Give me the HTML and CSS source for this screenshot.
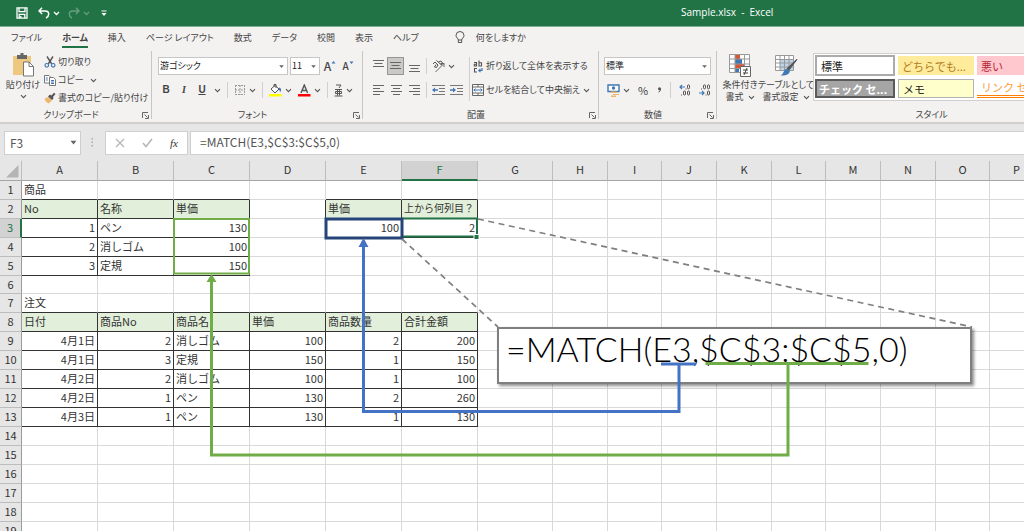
FILE: index.html
```html
<!DOCTYPE html>
<html lang="ja">
<head>
<meta charset="utf-8">
<title>Sample.xlsx - Excel</title>
<link rel="stylesheet" href="styles.css">
</head>
<body>
<svg class="defs" aria-hidden="true">
  <symbol id="chev" viewBox="0 0 7 7"><path d="M1 2.200 3.500 4.700 6 2.200" fill="none" stroke="#555" stroke-width="1.100"/></symbol>
  <symbol id="tri" viewBox="0 0 7 7"><path d="M1.200 2.200h4.600L3.500 5z" fill="#666"/></symbol>
  <symbol id="launch" viewBox="0 0 7 7"><path d="M.5 6V.5H6M2.500 2.500 5.500 5.500M6.500 3v3.500H3" fill="none" stroke="#666" stroke-width="1"/></symbol>
</svg>

<header class="titlebar">
  <div class="quick">
    <button type="button" aria-label="上書き保存"><svg width="12" height="12" viewBox="0 0 12 12"><path d="M1 .8h10v10.400H1zM3 1v3.600h6V1M3.200 11V7.400h5.600V11M4.800 9v2" fill="none" stroke="#fff" stroke-width="1.300"/></svg></button>
    <button type="button" aria-label="元に戻す"><svg width="12" height="12" viewBox="0 0 12 12"><path d="M4 .8 1 4l3.200 3M1.200 4H7c5 0 4.500 5 1 7" fill="none" stroke="#fff" stroke-width="1.500"/></svg><svg class="more" width="7" height="7" viewBox="0 0 7 7"><path d="M1 2 3.500 4.500 6 2" fill="none" stroke="#fff" stroke-width="1.300"/></svg></button>
    <button type="button" class="dim" aria-label="やり直し"><svg width="12" height="12" viewBox="0 0 12 12"><path d="M8 .8 11 4 7.800 7M10.800 4H5C0 4 .5 9 4 11" fill="none" stroke="#fff" stroke-width="1.500"/></svg><svg class="more" width="7" height="7" viewBox="0 0 7 7"><path d="M1 2 3.500 4.500 6 2" fill="none" stroke="#fff" stroke-width="1.300"/></svg></button>
    <button type="button" aria-label="クイック アクセス"><svg width="6" height="7" viewBox="0 0 6 7"><path d="M.5 1h5" stroke="#fff"/><path d="M.5 3h5L3 6z" fill="#fff"/></svg></button>
  </div>
  <h1>Sample.xlsx&nbsp; -&nbsp; Excel</h1>
</header>

<nav class="tabs">
  <button type="button">ファイル</button>
  <button type="button" class="active">ホーム</button>
  <button type="button">挿入</button>
  <button type="button">ページ レイアウト</button>
  <button type="button">数式</button>
  <button type="button">データ</button>
  <button type="button">校閲</button>
  <button type="button">表示</button>
  <button type="button">ヘルプ</button>
  <button type="button" class="tell"><svg width="10" height="13" viewBox="0 0 10 13"><path d="M3.300 9C3.300 7.300 1 6.800 1 4.500a4 4 0 0 1 8 0C9 6.800 6.700 7.300 6.700 9zM3.300 9v2.500h3.400V9" fill="none" stroke="#555"/></svg>何をしますか</button>
</nav>

<main class="ribbon">
  <section class="group">
    <div class="body clip">
      <button type="button" class="big paste">
        <svg width="24" height="24" viewBox="0 0 24 24"><path d="M2 3h18v19H2z" fill="#edc87e"/><path d="M6 2h3.500V0h3v2H16v4H6z" fill="#666"/><path d="M12.500 9H18l4.500 4.500V23h-10z" fill="#fff" stroke="#777"/><path d="M18 9v4.500h4.500" fill="none" stroke="#777"/></svg>
        <span>貼り付け</span><svg width="7" height="7"><use href="#chev"/></svg>
      </button>
      <div class="smalls">
        <button type="button"><svg width="12" height="12" viewBox="0 0 12 12"><path d="M3 .5 7.800 8M9 .5 4.200 8" stroke="#555" stroke-width="1.400"/><g fill="none" stroke="#3f78b5" stroke-width="1.200"><circle cx="2.800" cy="9.300" r="1.800"/><circle cx="9.200" cy="9.300" r="1.800"/></g></svg><span>切り取り</span></button>
        <button type="button"><svg width="12" height="12" viewBox="0 0 12 12"><path d="M.5 1.500h4.500l1.500 1.500v6h-6z" fill="#fff" stroke="#777"/><path d="M5.500 3.500h4l2 2v6h-6z" fill="#fff" stroke="#777"/><path d="M1.800 4h2M1.800 6h2M7 6.500h3M7 8h3M7 9.500h3" stroke="#3f78b5"/></svg><span>コピー</span><svg class="far" width="7" height="7"><use href="#chev"/></svg></button>
        <button type="button"><svg width="12" height="12" viewBox="0 0 12 12"><path d="m.5 6.500 4-1.500L8 8.500 4.500 11.500C3 11 1 9 .5 6.500z" fill="#edb86c"/><path d="m4 4.500 2-2 1.500 1L10 .8 11.500 2 9 5l.5 1.500-1.500 1.500z" fill="#555"/></svg><span>書式のコピー/貼り付け</span></button>
      </div>
    </div>
    <footer><span>クリップボード</span><button type="button" aria-label="クリップボードの設定"><svg width="7" height="7"><use href="#launch"/></svg></button></footer>
  </section>

  <section class="group">
    <div class="body font">
      <div class="row">
        <label class="combo grow"><select aria-label="フォント名"><option>游ゴシック</option></select><svg width="7" height="7"><use href="#tri"/></svg></label>
        <label class="combo size"><select aria-label="フォント サイズ"><option>11</option></select><svg width="7" height="7"><use href="#tri"/></svg></label>
        <button type="button" class="scale" aria-label="拡大"><b class="a1">A</b><svg width="5" height="12" viewBox="0 0 5 12"><path d="M.5 3.500 2.500 1l2 2.500z" fill="#3f78b5"/></svg></button>
        <button type="button" class="scale" aria-label="縮小"><b class="a2">A</b><svg width="5" height="12" viewBox="0 0 5 12"><path d="M.5 1.500h4L2.500 4z" fill="#3f78b5"/></svg></button>
      </div>
      <div class="row tools">
        <button type="button" class="t"><b>B</b></button>
        <button type="button" class="t"><b><i class="serif">I</i></b></button>
        <button type="button" class="t"><b><u>U</u></b></button>
        <button type="button" aria-label="下線の種類"><svg width="7" height="7"><use href="#chev"/></svg></button>
        <i class="sep"></i>
        <button type="button" class="duo" aria-label="罫線"><svg width="12" height="12" viewBox="0 0 12 12"><path d="M1 1.500h10M1 6h10M1 10.500h10M1.500 1v10M6 1v10M10.500 1v10" stroke="#999" stroke-dasharray="2 1"/></svg><svg width="7" height="7"><use href="#chev"/></svg></button>
        <i class="sep"></i>
        <button type="button" class="duo" aria-label="塗りつぶしの色"><svg width="13" height="13" viewBox="0 0 13 13"><path d="M0 10h12.500v2.500H0z" fill="#ff0"/><path d="m2 5 4-3.500L10 5 6 9z" fill="#fff" stroke="#555"/><path d="M5 3V.5h2V4" fill="none" stroke="#555"/><path d="M10 3.500c2 .5 2.500 2 1.800 4.500L10 6z" fill="#3f78b5"/></svg><svg width="7" height="7"><use href="#chev"/></svg></button>
        <button type="button" class="duo" aria-label="フォントの色"><svg width="13" height="13" viewBox="0 0 13 13"><path d="M0 10h12.500v2.500H0z" fill="#f00"/><path d="M3 9 6.300 1 9.600 9M4 6.500h4.600" fill="none" stroke="#555" stroke-width="1.400"/></svg><svg width="7" height="7"><use href="#chev"/></svg></button>
        <i class="sep"></i>
        <button type="button" class="duo" aria-label="ふりがな"><svg width="9" height="13" viewBox="0 0 9 13"><path d="M2 1h5L5 4M1 5.500h7M3.500 5.500v6M5.500 5.500v6M1.500 7.500h6v2h-6zM.5 12h8" fill="none" stroke="#555"/></svg><svg width="7" height="7"><use href="#chev"/></svg></button>
      </div>
    </div>
    <footer><span>フォント</span><button type="button" aria-label="フォントの設定"><svg width="7" height="7"><use href="#launch"/></svg></button></footer>
  </section>

  <section class="group">
    <div class="body align">
      <div class="grid">
        <button type="button" aria-label="上揃え"><svg width="11" height="12" viewBox="0 0 11 12"><path d="M0 .5h11M1.500 3.500h8M0 6.500h11" stroke="#666"/></svg></button>
        <button type="button" class="on" aria-label="上下中央揃え"><svg width="11" height="12" viewBox="0 0 11 12"><path d="M0 2.500h11M1.500 5.500h8M0 8.500h11" stroke="#666"/></svg></button>
        <button type="button" aria-label="下揃え"><svg width="11" height="12" viewBox="0 0 11 12"><path d="M0 5.500h11M1.500 8.500h8M0 11.500h11" stroke="#666"/></svg></button>
        <i class="sep"></i>
        <button type="button" class="duo wide" aria-label="方向"><svg width="13" height="13" viewBox="0 0 13 13"><path d="M3.500 12 12 3.500M12 7V3.500H8.500" fill="none" stroke="#666"/><path d="M1 4 3 2l3 3-1.500 2.500-2-.5L4 4.500M4.500 .5l5 4.500M6.500 2 9 1l1.500 2-1.500 2" fill="none" stroke="#555"/></svg><svg width="7" height="7"><use href="#chev"/></svg></button>
        <button type="button" aria-label="左揃え"><svg width="11" height="12" viewBox="0 0 11 12"><path d="M0 1.500h11M0 4.500h7M0 7.500h11M0 10.500h7" stroke="#666"/></svg></button>
        <button type="button" aria-label="中央揃え"><svg width="11" height="12" viewBox="0 0 11 12"><path d="M0 1.500h11M2 4.500h7M0 7.500h11M2 10.500h7" stroke="#666"/></svg></button>
        <button type="button" aria-label="右揃え"><svg width="11" height="12" viewBox="0 0 11 12"><path d="M0 1.500h11M4 4.500h7M0 7.500h11M4 10.500h7" stroke="#666"/></svg></button>
        <i class="sep"></i>
        <div class="dents">
          <button type="button" aria-label="インデントを減らす"><svg width="13" height="12" viewBox="0 0 13 12"><path d="M0 1.500h13M7 4.500h6M7 7.500h6M0 10.500h13" stroke="#777"/><path d="M0 6l3-2.500v1.700h3v1.600H3v1.700z" fill="#3f78b5"/></svg></button>
          <button type="button" aria-label="インデントを増やす"><svg width="13" height="12" viewBox="0 0 13 12"><path d="M0 1.500h13M7 4.500h6M7 7.500h6M0 10.500h13" stroke="#777"/><path d="M6 6 3 3.500v1.700H0v1.600h3v1.700z" fill="#3f78b5"/></svg></button>
        </div>
      </div>
      <i class="sep tall"></i>
      <div class="wraps">
        <button type="button"><svg width="12" height="13" viewBox="0 0 12 13"><g fill="none" stroke="#555" stroke-width="1.100"><path d="M2 2.500h2.500V6H2.300V4.300h2M7 .5V6h2.500V2.800H7M5 8.500H2.500V12H5"/></g><path d="M10 8v2.500H7M8.500 8.800 6.800 10.500l1.700 1.700" fill="none" stroke="#3f78b5" stroke-width="1.200"/></svg><span>折り返して全体を表示する</span></button>
        <button type="button"><svg width="12" height="12" viewBox="0 0 12 12"><path d="M.5.5h11v11H.5z" fill="#fff"/><path d="M.5.5h11v11H.5zM.5 3h11M.5 9h11M6 .5V3M6 9v2.500" fill="none" stroke="#666"/><path d="M1.500 6h9M3.500 4.500 2 6l1.500 1.500M8.500 4.500 10 6 8.500 7.500" fill="none" stroke="#3f78b5"/></svg><span>セルを結合して中央揃え</span><svg class="far2" width="7" height="7"><use href="#chev"/></svg></button>
      </div>
    </div>
    <footer><span>配置</span><button type="button" aria-label="配置の設定"><svg width="7" height="7"><use href="#launch"/></svg></button></footer>
  </section>

  <section class="group">
    <div class="body num">
      <div class="row"><label class="combo grow"><select aria-label="数値の書式"><option>標準</option></select><svg width="7" height="7"><use href="#tri"/></svg></label></div>
      <div class="row tools">
        <button type="button" class="duo" aria-label="通貨"><svg width="13" height="13" viewBox="0 0 13 13"><path d="M1 1h11v6.500H1z" fill="#fff" stroke="#3f78b5" stroke-width="1.400"/><circle cx="6.500" cy="4" r="1.700" fill="#3f78b5"/><path d="M4 7.500h6V9H4zM6 10h6v1H6zM4 11.500h5V13H4z" fill="#edb86c"/></svg><svg width="7" height="7"><use href="#chev"/></svg></button>
        <button type="button" class="pct">%</button>
        <button type="button" aria-label="桁区切りスタイル" class="pct"><svg width="5" height="6" viewBox="0 0 5 6"><circle cx="2.500" cy="1.800" r="1.500" fill="#555"/><path d="M3.600 1.800Q3.700 4.200 1.500 5.200" fill="none" stroke="#555"/></svg></button>
        <i class="sep"></i>
        <button type="button" aria-label="小数点以下の表示桁数を増やす"><svg width="12" height="12" viewBox="0 0 12 12"><path d="M6 3H1M3 1 1 3l2 2" fill="none" stroke="#3f78b5" stroke-width="1.200"/><g fill="none" stroke="#555"><rect x="8.500" y=".8" width="2" height="4" rx="1"/><rect x="4.500" y="7" width="2" height="4" rx="1"/><rect x="8.500" y="7" width="2" height="4" rx="1"/><path d="M2 11h1M6.500 5h1"/></g></svg></button>
        <button type="button" aria-label="小数点以下の表示桁数を減らす"><svg width="12" height="12" viewBox="0 0 12 12"><path d="M0 9h5M3 7l2 2-2 2" fill="none" stroke="#3f78b5" stroke-width="1.200"/><g fill="none" stroke="#555"><rect x="4.500" y=".8" width="2" height="4" rx="1"/><rect x="8.500" y=".8" width="2" height="4" rx="1"/><rect x="8.500" y="7" width="2" height="4" rx="1"/><path d="M2 5h1M6.500 11h1"/></g></svg></button>
      </div>
    </div>
    <footer><span>数値</span><button type="button" aria-label="数値の設定"><svg width="7" height="7"><use href="#launch"/></svg></button></footer>
  </section>

  <section class="group last">
    <div class="body style">
      <button type="button" class="big cond">
        <svg width="24" height="24" viewBox="0 0 24 24"><path d="M1.500 1.500h20v18h-20z" fill="#fff"/><path d="M7 1h5v5H7zM7 11h9v4.500H7z" fill="#d65532"/><path d="M7 6h7v5H7zM7 15.500h4V20H7z" fill="#3f78b5"/><path d="M1.500 1.500h20v18h-20zM1.500 6h20M1.500 11h20M1.500 15.500h20M7 1v19M16.500 1v19" fill="none" stroke="#999"/><path d="M12.500 13.500h10v10h-10z" fill="#fff" stroke="#666"/><path d="M15 17h5M15 20h5M19 15l-3 7" stroke="#444"/></svg>
        <span>条件付き</span><span>書式<svg width="7" height="7"><use href="#chev"/></svg></span>
      </button>
      <button type="button" class="big tbl">
        <svg width="24" height="24" viewBox="0 0 24 24"><path d="M1.500 2.500h18v15h-18z" fill="#fff"/><path d="M6 6.500h13.500v11H6z" fill="#bdd3e8"/><path d="M1.500 2.500h18v15h-18zM1.500 6.500h18M1.500 10h18M1.500 14h18M6 2v16M10.500 2v16M15 2v16" fill="none" stroke="#999"/><path d="M23 6.500 15 17l-2-1.500L22 7z" fill="#555" stroke="#555"/><path d="M12.500 15.500 16 18c-1 4-5 5-9.500 4.500 3-1 3-5.500 6-7z" fill="#3f78b5"/></svg>
        <span>テーブルとして</span><span>書式設定<svg width="7" height="7"><use href="#chev"/></svg></span>
      </button>
      <div class="gallery">
        <button type="button" class="normal">標準</button>
        <button type="button" class="neutral">どちらでも...</button>
        <button type="button" class="bad">悪い</button>
        <button type="button" class="check">チェック セ...</button>
        <button type="button" class="memo">メモ</button>
        <button type="button" class="linkc">リンク セ</button>
      </div>
    </div>
    <footer><span>スタイル</span></footer>
  </section>
</main>

<div class="fbar">
  <div class="namebox"><input type="text" aria-label="名前ボックス" value="F3"><svg width="9" height="9" viewBox="0 0 7 7"><use href="#tri"/></svg></div>
  <svg class="dots" width="3" height="9" viewBox="0 0 3 9"><path d="M.5 0h1.500v1.500H.5zM.5 3.500h1.500V5H.5zM.5 7h1.500v1.500H.5z" fill="#aaa"/></svg>
  <div class="fbtns">
    <button type="button" aria-label="キャンセル"><svg width="10" height="10" viewBox="0 0 10 10"><path d="m1 1 8 8M9 1 1 9" stroke="#b5b5b5" stroke-width="1.300"/></svg></button>
    <button type="button" aria-label="入力"><svg width="11" height="10" viewBox="0 0 11 10"><path d="m1 5 3 3.500L10 1" fill="none" stroke="#b5b5b5" stroke-width="1.500"/></svg></button>
    <button type="button" class="fx"><i>fx</i></button>
  </div>
  <input class="formula" type="text" aria-label="数式バー" value="=MATCH(E3,$C$3:$C$5,0)">
</div>

<div class="sheet">
<table>
<colgroup><col class="rh"><col class="w"><col class="w"><col class="w"><col class="w"><col class="w"><col class="w"><col class="g"><col class="m"><col class="n"><col class="m"><col class="m"><col class="n"><col class="m"><col class="m"><col class="n"><col></colgroup>
<thead><tr><th class="corner"><svg width="13" height="13" viewBox="0 0 13 13"><path d="M12.500 0v12.500H0z" fill="#b4b4b4"/></svg></th><th>A</th><th>B</th><th>C</th><th>D</th><th>E</th><th class="sel">F</th><th>G</th><th>H</th><th>I</th><th>J</th><th>K</th><th>L</th><th>M</th><th>N</th><th>O</th><th>P</th></tr></thead>
<tbody>
<tr><th>1<td class="bb">商品<td class="bb"><td class="bb"><td><td class="bb"><td class="bb">
<td><td><td><td><td><td><td><td><td><td></tr>
<tr><th>2<td class="h">No<td class="h">名称<td class="h">単価<td class="br"><td class="h">単価<td class="h s">上から何列目？
<td><td><td><td><td><td><td><td><td><td></tr>
<tr><th class="sel">3<td class="d r">1<td class="d">ペン<td class="d r">130<td class="br"><td class="d r">100<td class="d r">2
<td><td><td><td><td><td><td><td><td><td></tr>
<tr><th>4<td class="d r">2<td class="d">消しゴム<td class="d r">100<td><td><td>
<td><td><td><td><td><td><td><td><td><td></tr>
<tr><th>5<td class="d r">3<td class="d">定規<td class="d r">150<td><td><td>
<td><td><td><td><td><td><td><td><td><td></tr>
<tr class="low"><th>6<td><td><td><td><td><td>
<td><td><td><td><td><td><td><td><td><td></tr>
<tr><th>7<td class="bb">注文<td class="bb"><td class="bb"><td class="bb"><td class="bb"><td class="bb">
<td><td><td><td><td><td><td><td><td><td></tr>
<tr><th>8<td class="h">日付<td class="h">商品No<td class="h">商品名<td class="h">単価<td class="h">商品数量<td class="h">合計金額
<td><td><td><td><td><td><td><td><td><td></tr>
<tr><th>9<td class="d r">4月1日<td class="d r">2<td class="d">消しゴム<td class="d r">100<td class="d r">2<td class="d r">200
<td><td><td><td><td><td><td><td><td><td></tr>
<tr><th>10<td class="d r">4月1日<td class="d r">3<td class="d">定規<td class="d r">150<td class="d r">1<td class="d r">150
<td><td><td><td><td><td><td><td><td><td></tr>
<tr><th>11<td class="d r">4月2日<td class="d r">2<td class="d">消しゴム<td class="d r">100<td class="d r">1<td class="d r">100
<td><td><td><td><td><td><td><td><td><td></tr>
<tr><th>12<td class="d r">4月2日<td class="d r">1<td class="d">ペン<td class="d r">130<td class="d r">2<td class="d r">260
<td><td><td><td><td><td><td><td><td><td></tr>
<tr><th>13<td class="d r">4月3日<td class="d r">1<td class="d">ペン<td class="d r">130<td class="d r">1<td class="d r">130
<td><td><td><td><td><td><td><td><td><td></tr>
<tr><th>14<td><td><td><td><td><td>
<td><td><td><td><td><td><td><td><td><td></tr>
<tr><th>15<td><td><td><td><td><td>
<td><td><td><td><td><td><td><td><td><td></tr>
<tr><th>16<td><td><td><td><td><td>
<td><td><td><td><td><td><td><td><td><td></tr>
<tr><th>17<td><td><td><td><td><td>
<td><td><td><td><td><td><td><td><td><td></tr>
<tr><th>18<td><td><td><td><td><td>
<td><td><td><td><td><td><td><td><td><td></tr>
<tr><th>19<td><td><td><td><td><td>
<td><td><td><td><td><td><td><td><td><td></tr>
</tbody>
</table>
<div class="callout">=MATCH(E3,$C$3:$C$5,0)</div>
<svg class="marks" width="1024" height="370" viewBox="0 161 1024 370" fill="none">
  <path d="M402 218.500h75v18h-75z" stroke="#217346" stroke-width="2"/>
  <path d="M474 234.500h5v5h-5z" fill="#217346" stroke="#fff"/>
  <path d="M326 219h76v19h-76z" stroke="#264478" stroke-width="3"/>
  <path d="M174 219h75v54.500h-75z" stroke="#70ad47" stroke-width="2"/>
  <path d="M478 219 972 327M402 239l96 88" stroke="#7f7f7f" stroke-width="1.700" stroke-dasharray="6 4.500"/>
  <g stroke="#4472c4" stroke-width="3"><path d="M661 364h35M679 364v47.500H363.500V245"/></g>
  <path d="m358.500 247 5-9 5 9z" fill="#4472c4"/>
  <g stroke="#70ad47" stroke-width="3"><path d="M705.500 363.500h163M788 363.500V455H211.500V281"/></g>
  <path d="m206.500 282 5-8 5 8z" fill="#70ad47"/>
</svg>
</div>
</body>
</html>
```

FILE: styles.css
```css
* { box-sizing: border-box; }
html, body { height: 100%; }
body {
  margin: 0;
  display: flex;
  flex-direction: column;
  overflow: hidden;
  background: #e6e6e6;
  color: #444;
  font-family: "Noto Sans CJK JP", sans-serif;
  font-size: 9px;
  line-height: 12px;
}
button, input, select { font: inherit; color: inherit; }
button {
  border: 0;
  padding: 0;
  background: none;
  display: flex;
  align-items: center;
  justify-content: center;
  white-space: nowrap;
  font-feature-settings: "palt";
}
svg { display: block; flex: none; }
.defs { position: absolute; width: 0; height: 0; }

.titlebar { flex: none; height: 26px; background: #217346; position: relative; display: flex; align-items: center; }
.quick { display: flex; gap: 8px; padding-left: 16px; }
.quick .more { margin-left: 3px; }
.quick .dim { opacity: .3; }
.quick button:first-child { margin-right: 2px; }
.quick button:last-child { margin-left: 3px; }
.titlebar h1 { position: absolute; left: 681px; top: 6px; margin: 0; font: 10px/12px "Open Sans", sans-serif; color: #fff; white-space: nowrap; }

.tabs { flex: none; display: flex; gap: 20px; height: 25px; padding-left: 11px; background: #f3f2f1; border-top: 1px solid #7fae92; }
.tabs button { height: 21px; }
.tabs .active { font-weight: 700; border-bottom: 2px solid #217346; padding-top: 2px; }
.tabs .tell { gap: 11px; margin-left: 16px; }

.ribbon { flex: none; display: grid; grid-template-columns: 152px 211px 236px 118px 1fr; height: 71px; background: #f3f2f1; }
.group { display: flex; flex-direction: column; border-right: 1px solid #c8c6c4; height: 68px; min-width: 0; }
.group.last { border-right: 0; }
.body { flex: 1; display: flex; min-width: 0; min-height: 0; }
.group footer { display: flex; align-items: center; height: 12px; padding: 0 2px 0 0; margin-bottom: -2px; font-feature-settings: "palt"; }
.group footer span { flex: 1; text-align: center; }
.group.last footer { padding-left: 124px; }
.big { flex-direction: column; justify-content: flex-start; line-height: 12px; }
.big > svg:first-child { margin-bottom: 2px; }
.big span { display: flex; align-items: center; gap: 4px; }
.clip { padding: 2px 0 0 6px; gap: 4px; }
.paste { width: 34px; }
.paste svg:last-child { margin-top: 2px; }
.smalls { display: flex; flex-direction: column; }
.smalls button { height: 18px; justify-content: flex-start; gap: 2px; }
.smalls .far { margin-left: 4px; }

.font, .num { flex-direction: column; padding: 6px 5px 0 6px; gap: 6px; }
.num { padding-left: 5px; }
.row { display: flex; align-items: center; height: 18px; gap: 2px; }
.combo { position: relative; display: flex; align-items: center; height: 18px; background: #fff; border: 1px solid #c8c6c4; width: 30px; }
.combo.grow { width: 130px; }
.num .combo { width: 107px; }
.combo select { appearance: none; border: 0; background: none; width: 100%; padding: 0 1px; font-size: 9px; line-height: 12px; color: #222; font-feature-settings: "palt"; }
.combo svg { position: absolute; right: 2px; }
.scale { width: 16px; }
.scale b { font-weight: 500; }
.a1 { font-size: 12px; }
.a2 { font-size: 10px; }
.tools { gap: 6px; }
.font .tools { padding-left: 2px; }
.font .tools .t { width: 12px; font: 700 10px/12px "Liberation Sans", sans-serif; }
.serif { font-family: "Liberation Serif", serif; }
.sep { width: 1px; height: 16px; background: #d2d0ce; }
.sep.tall { height: 44px; }
.duo { gap: 3px; }
.num .tools { gap: 8px; padding-left: 3px; }
.pct { font-size: 11px; width: 12px; }

.align { padding: 6px 0 0 6px; }
.grid { display: grid; grid-template-columns: 18px 18px 18px 6px 40px; grid-template-rows: 18px 18px; row-gap: 6px; align-content: start; align-items: center; }
.grid > button { height: 18px; }
.grid .on { background: #cbc9c8; border: 1px solid #979593; height: 18px; width: 17px; }
.grid .sep { justify-self: center; }
.grid .wide { justify-content: flex-start; padding-left: 3px; }
.dents { display: flex; gap: 5px; padding-left: 3px; }
.wraps { display: flex; flex-direction: column; gap: 6px; padding-left: 2px; }
.wraps button { height: 18px; justify-content: flex-start; gap: 2px; }
.far2 { margin-left: 1px; }

.style { padding: 2px 0 0 4px; overflow: hidden; }
.cond { width: 38px; }
.tbl { width: 54px; }
.gallery { flex: 1; display: grid; grid-template-columns: 80px 76px 90px; grid-template-rows: 21px 19px; gap: 3px; padding: 1px 0 1px 1px; background: #fff; border: 1px solid #d2d0ce; border-right: 0; height: 48px; overflow: hidden; }
.gallery button { justify-content: flex-start; padding-left: 4px; font-size: 11px; font-feature-settings: normal; color: #222; }
.gallery .normal { border: 2px solid #ababab; }
.gallery .neutral { background: #ffeb9c; color: #b07c1e; margin: 1px 0; }
.gallery .bad { background: #ffc7ce; color: #b52a35; margin: 1px 0; }
.gallery .check { background: #a5a5a5; border: 2px solid #5a5a5a; color: #fff; font-weight: 700; padding-left: 2px; }
.gallery .memo { background: #ffffcc; border: 1px solid #b2b2b2; }
.gallery .linkc { color: #fa9d3c; border-bottom: 3px double #ff8001; }

.fbar { flex: none; display: flex; align-items: center; height: 39px; border-top: 2px solid #d2d0ce; padding: 0 0 0 4px; }
.namebox { display: flex; align-items: center; width: 77px; height: 24px; background: #fff; border: 1px solid #cfcfcf; padding: 0 2px 0 5px; }
.fbar input { border: 0; background: #fff; font-size: 12px; line-height: 16px; min-width: 0; color: #555; outline: 0; }
.namebox input { flex: 1; padding: 0; }
.dots { margin: 0 11px 0 10px; }
.fbtns { display: flex; align-items: center; justify-content: space-between; width: 83px; height: 24px; background: #fff; border: 1px solid #cfcfcf; padding: 0 9px; margin-right: 2px; }
.fbar .fx { font: 11px/16px "Liberation Serif", serif; color: #333; }
.fbar .formula { flex: 1; height: 24px; border: 1px solid #cfcfcf; border-right: 0; padding: 0 9px 2px; }

.sheet { flex: 1; position: relative; overflow: hidden; background: #fff; }
table { table-layout: fixed; border-collapse: separate; border-spacing: 0; width: 100%; min-width: 1044px; font-size: 11px; color: #333; }
.rh { width: 22px; }
.w { width: 76px; }
.g { width: 75px; }
.m { width: 55px; }
.n { width: 54px; }
th, td { height: 19px; padding: 0 2px; border: solid #d9d9d9; border-width: 0 1px 1px 0; line-height: 16px; vertical-align: top; white-space: nowrap; text-align: left; }
th { font-weight: 400; text-align: center; background: #e6e6e6; padding: 0; }
.low th, .low td { height: 18px; }
thead th { height: 20px; border-right-color: #bdbdbd; border-bottom-color: #a6a6a6; }
tbody th { border-right-color: #9b9b9b; border-bottom-color: #bdbdbd; }
.corner svg { margin-left: 6px; margin-top: 4px; }
thead .sel { background: #d2d2d2; color: #217346; border-bottom: 2px solid #217346; }
tbody .sel { background: #d2d2d2; color: #217346; border-right: 2px solid #217346; }
.h { background: #e2efda; }
.h, .d { border-color: #333; }
.r { text-align: right; }
.s { font-size: 10px; }
.bb { border-bottom-color: #333; }
.br { border-right-color: #333; }

.callout { position: absolute; left: 497px; top: 166px; width: 475px; height: 57px; border: 2px solid #7f7f7f; background: #fff; box-shadow: 2px 2px 3px rgba(0,0,0,.45); padding-left: 7px; font: 300 34px/40px Lato, sans-serif; color: #000; white-space: nowrap; }
.marks { position: absolute; left: 0; top: 0; }
```
